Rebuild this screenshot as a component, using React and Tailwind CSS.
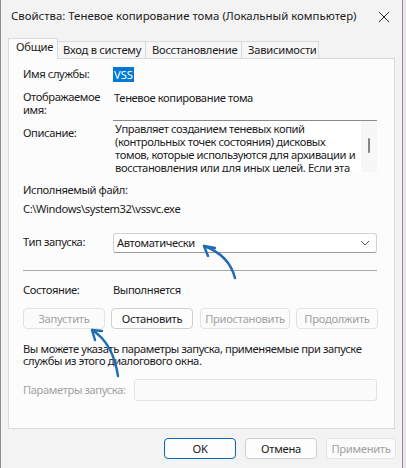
import React from 'react';

const font = { fontFamily: '"Noto Sans", "Open Sans", sans-serif' };

const Btn = ({ children, disabled, primary, className = '' }) => (
  <div
    className={`flex shrink-0 items-center justify-center whitespace-nowrap rounded-[4px] border text-[11.2px] leading-none tracking-[-0.3px] ${
      disabled
        ? 'border-[#e3e3e3] bg-[#fbfbfb] text-[#a1a1a1]'
        : primary
        ? 'border-[#0067c0] bg-[#fdfdfd] text-[#1b1b1b]'
        : 'border-[#cfcfcf] bg-[#fdfdfd] text-[#1b1b1b]'
    } ${className}`}
  >
    {children}
  </div>
);

const Tab = ({ label, active, className = '' }) => (
  <div
    className={`flex shrink-0 items-center whitespace-nowrap border border-b-0 border-[#dadada] text-[11.2px] leading-none tracking-[-0.25px] text-[#1b1b1b] ${
      active ? 'relative z-10 -mb-px h-[21px] bg-[#fcfcfc] pb-[4px]' : '-ml-px h-[17px] bg-[#f6f6f6]'
    } ${className}`}
  >
    {label}
  </div>
);

const Arrows = () => (
  <svg className="pointer-events-none absolute left-0 top-0" width="406" height="468" fill="none" stroke="#1e6cb4" strokeWidth="2.4" strokeLinecap="round" strokeLinejoin="round">
    <path d="M235 278 Q229 255 204 246" />
    <path d="M215 248 L204 246 L208 256" />
    <path d="M118 376 Q113 343 92 330" />
    <path d="M102 331 L92 330 L95 340" />
  </svg>
);

export default function App() {
  return (
    <div style={font} className="relative h-[468px] w-[406px] overflow-hidden bg-[#e9e7e9]">
      <div className="flex h-[468px] w-[403px] flex-col border-x border-[#8f8a8f] bg-[#f3f3f3]">
        {/* title bar */}
        <div className="flex h-[38px] items-start justify-between pl-[10px] pr-[12px] pt-[8px]">
          <span className="whitespace-nowrap text-[11.4px] leading-4 text-[#1b1b1b]">
            Свойства: Теневое копирование тома (Локальный компьютер)
          </span>
          <svg width="12" height="12" viewBox="0 0 12 12" className="mt-[3px]" stroke="#2b2b2b" strokeWidth="1">
            <path d="M1 1 L11 11 M11 1 L1 11" />
          </svg>
        </div>

        {/* tabs */}
        <div className="flex h-[20px] items-end pl-[7px]">
          <Tab label="Общие" active className="w-[50px] pl-[7px]" />
          <Tab label="Вход в систему" className="w-[89px] pl-[5px]" />
          <Tab label="Восстановление" className="w-[97px] pl-[6px]" />
          <Tab label="Зависимости" className="w-[78px] pl-[6px]" />
        </div>

        {/* panel */}
        <div className="mx-[7px] flex h-[371px] flex-col whitespace-nowrap border border-[#dadada] bg-[#fcfcfc] pl-[14px] pr-[17px] pt-[7px] text-[11.2px] tracking-[-0.4px] text-[#1b1b1b]">
          <div className="flex h-[16px] items-center">
            <span className="w-[90px] shrink-0">Имя службы:</span>
            <span className="bg-[#0078d7] px-[1px] leading-[15px] tracking-normal text-white">VSS</span>
          </div>

          <div className="mt-[8px] flex h-[26px]">
            <span className="w-[90px] shrink-0 leading-[13px]">
              Отображаемое
              <br />
              имя:
            </span>
            <span className="pl-[1px] leading-[16px]">Теневое копирование тома</span>
          </div>

          <div className="mt-[4px] flex h-[52px]">
            <span className="w-[90px] shrink-0 pt-[5px] leading-4">Описание:</span>
            <div className="flex flex-1 overflow-hidden border-t border-[#8a8a8a] bg-white">
              <div className="flex-1 overflow-hidden pl-[2px] pt-[1px] leading-[13px]">
                Управляет созданием теневых копий
                <br />
                (контрольных точек состояния) дисковых
                <br />
                томов, которые используются для архивации и
                <br />
                восстановления или для иных целей. Если эта
              </div>
              <div className="flex w-[16px] shrink-0 justify-center bg-[#f7f7f7] pt-[17px]">
                <div className="h-[15px] w-[2px] rounded-full bg-[#858585]" />
              </div>
            </div>
          </div>

          <div className="mt-[10px] h-[16px] leading-4">Исполняемый файл:</div>
          <div className="mt-[3px] h-[16px] leading-4">C:\Windows\system32\vssvc.exe</div>

          <div className="mt-[16px] flex h-[20px] items-center">
            <span className="w-[90px] shrink-0 pb-[3px] leading-4">Тип запуска:</span>
            <div className="flex h-[20px] flex-1 items-center justify-between rounded-[3px] border border-[#d2d2d2] border-b-[#9a9a9a] bg-white pl-[3px] pr-[6px]">
              <span className="leading-4">Автоматически</span>
              <svg width="10" height="6" viewBox="0 0 10 6" fill="none" stroke="#555" strokeWidth="1">
                <path d="M1 1 L5 5 L9 1" />
              </svg>
            </div>
          </div>

          <div className="mt-[17px] h-px bg-[#a8a8a8]" />

          <div className="mt-[11px] flex h-[16px] items-center">
            <span className="w-[90px] shrink-0">Состояние:</span>
            <span>Выполняется</span>
          </div>

          <div className="mt-[10px] flex h-[21px] items-stretch gap-[6px]">
            <Btn disabled className="w-[82px]">Запустить</Btn>
            <Btn className="w-[82px]">Остановить</Btn>
            <Btn disabled className="ml-[1px] w-[90px]">Приостановить</Btn>
            <Btn disabled className="w-[82px]">Продолжить</Btn>
          </div>

          <div className="mt-[14px] leading-[12px]">
            Вы можете указать параметры запуска, применяемые при запуске
            <br />
            службы из этого диалогового окна.
          </div>

          <div className="mt-[12px] flex h-[22px] items-center">
            <span className="w-[111px] shrink-0 text-[#a1a1a1]">Параметры запуска:</span>
            <div className="h-[22px] flex-1 rounded-[3px] border border-[#e3e3e3] bg-[#fbfbfb]" />
          </div>
        </div>

        {/* footer */}
        <div className="mt-[9px] flex h-[21px] justify-end gap-[9px] pr-[6px]">
          <Btn primary className="w-[72px]">OK</Btn>
          <Btn className="w-[72px]">Отмена</Btn>
          <Btn disabled className="w-[70px]">Применить</Btn>
        </div>
      </div>
      <Arrows />
    </div>
  );
}
